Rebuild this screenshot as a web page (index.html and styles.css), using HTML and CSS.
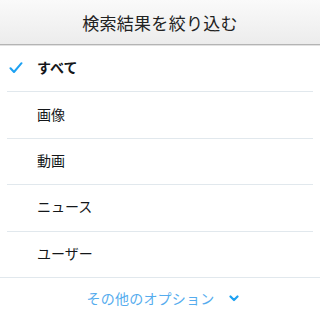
FILE: index.html
```html
<!DOCTYPE html>
<html lang="ja">
<head>
<meta charset="utf-8">
<link rel="stylesheet" href="styles.css">
</head>
<body>
<div class="sheet">
  <header class="head">検索結果を絞り込む</header>
  <ul class="list">
    <li class="row selected">
      <span class="check"><svg width="14" height="12" viewBox="0 0 14 12"><path d="M1.5 6.2 L5 10 L12.5 1.2" fill="none" stroke="#1da1f2" stroke-width="2" stroke-linecap="round" stroke-linejoin="round"/></svg></span>
      <span class="label">すべて</span>
    </li>
    <li class="row"><span class="check"></span><span class="label">画像</span></li>
    <li class="row"><span class="check"></span><span class="label">動画</span></li>
    <li class="row"><span class="check"></span><span class="label">ニュース</span></li>
    <li class="row last"><span class="check"></span><span class="label">ユーザー</span></li>
  </ul>
  <div class="more">
    <span class="more-text">その他のオプション</span>
    <svg class="chev" width="10" height="7" viewBox="0 0 10 7"><path d="M1.5 1.5 L5 5 L8.5 1.5" fill="none" stroke="#1da1f2" stroke-width="2.2" stroke-linecap="round" stroke-linejoin="round"/></svg>
  </div>
</div>
</body>
</html>
```
FILE: styles.css
```css
html, body {
  margin: 0;
  padding: 0;
  background: #ffffff;
}
body {
  font-family: "Noto Sans CJK JP", "Noto Sans", sans-serif;
  color: #14171a;
}
.sheet {
  width: 320px;
  height: 320px;
  overflow: hidden;
  display: flex;
  flex-direction: column;
}
.head {
  height: 44px;
  display: flex;
  align-items: center;
  justify-content: center;
  font-size: 17px;
  letter-spacing: 0.3px;
  color: #222222;
  background: linear-gradient(#fafafa, #ececec);
  border-bottom: 1px solid #b4b4b4;
  box-shadow: 0 1px 0 #e2e2e2;
}
.list {
  list-style: none;
  margin: 0;
  padding: 0;
  margin-top: 1px;
}
.row {
  height: 46.4px;
  margin: 0 7px;
  display: flex;
  align-items: center;
  border-bottom: 1px solid #e1e8ed;
  font-size: 14px;
  padding-bottom: 3px;
  box-sizing: border-box;
}
.row.last {
  margin: 0;
  padding: 0 7px 3px;
}
.check {
  width: 30px;
  display: flex;
  align-items: center;
  padding-left: 2px;
  padding-top: 1px;
  box-sizing: border-box;
}
.label {
  line-height: 1;
}
.selected .label {
  font-weight: bold;
}
.more {
  flex: 1;
  display: flex;
  align-items: center;
  justify-content: center;
  gap: 15px;
  padding-left: 6px;
  padding-bottom: 2px;
  color: #55acee;
  font-size: 14px;
}
.more-text {
  letter-spacing: 0.2px;
}
.chev {
  margin-top: 2px;
}
```
